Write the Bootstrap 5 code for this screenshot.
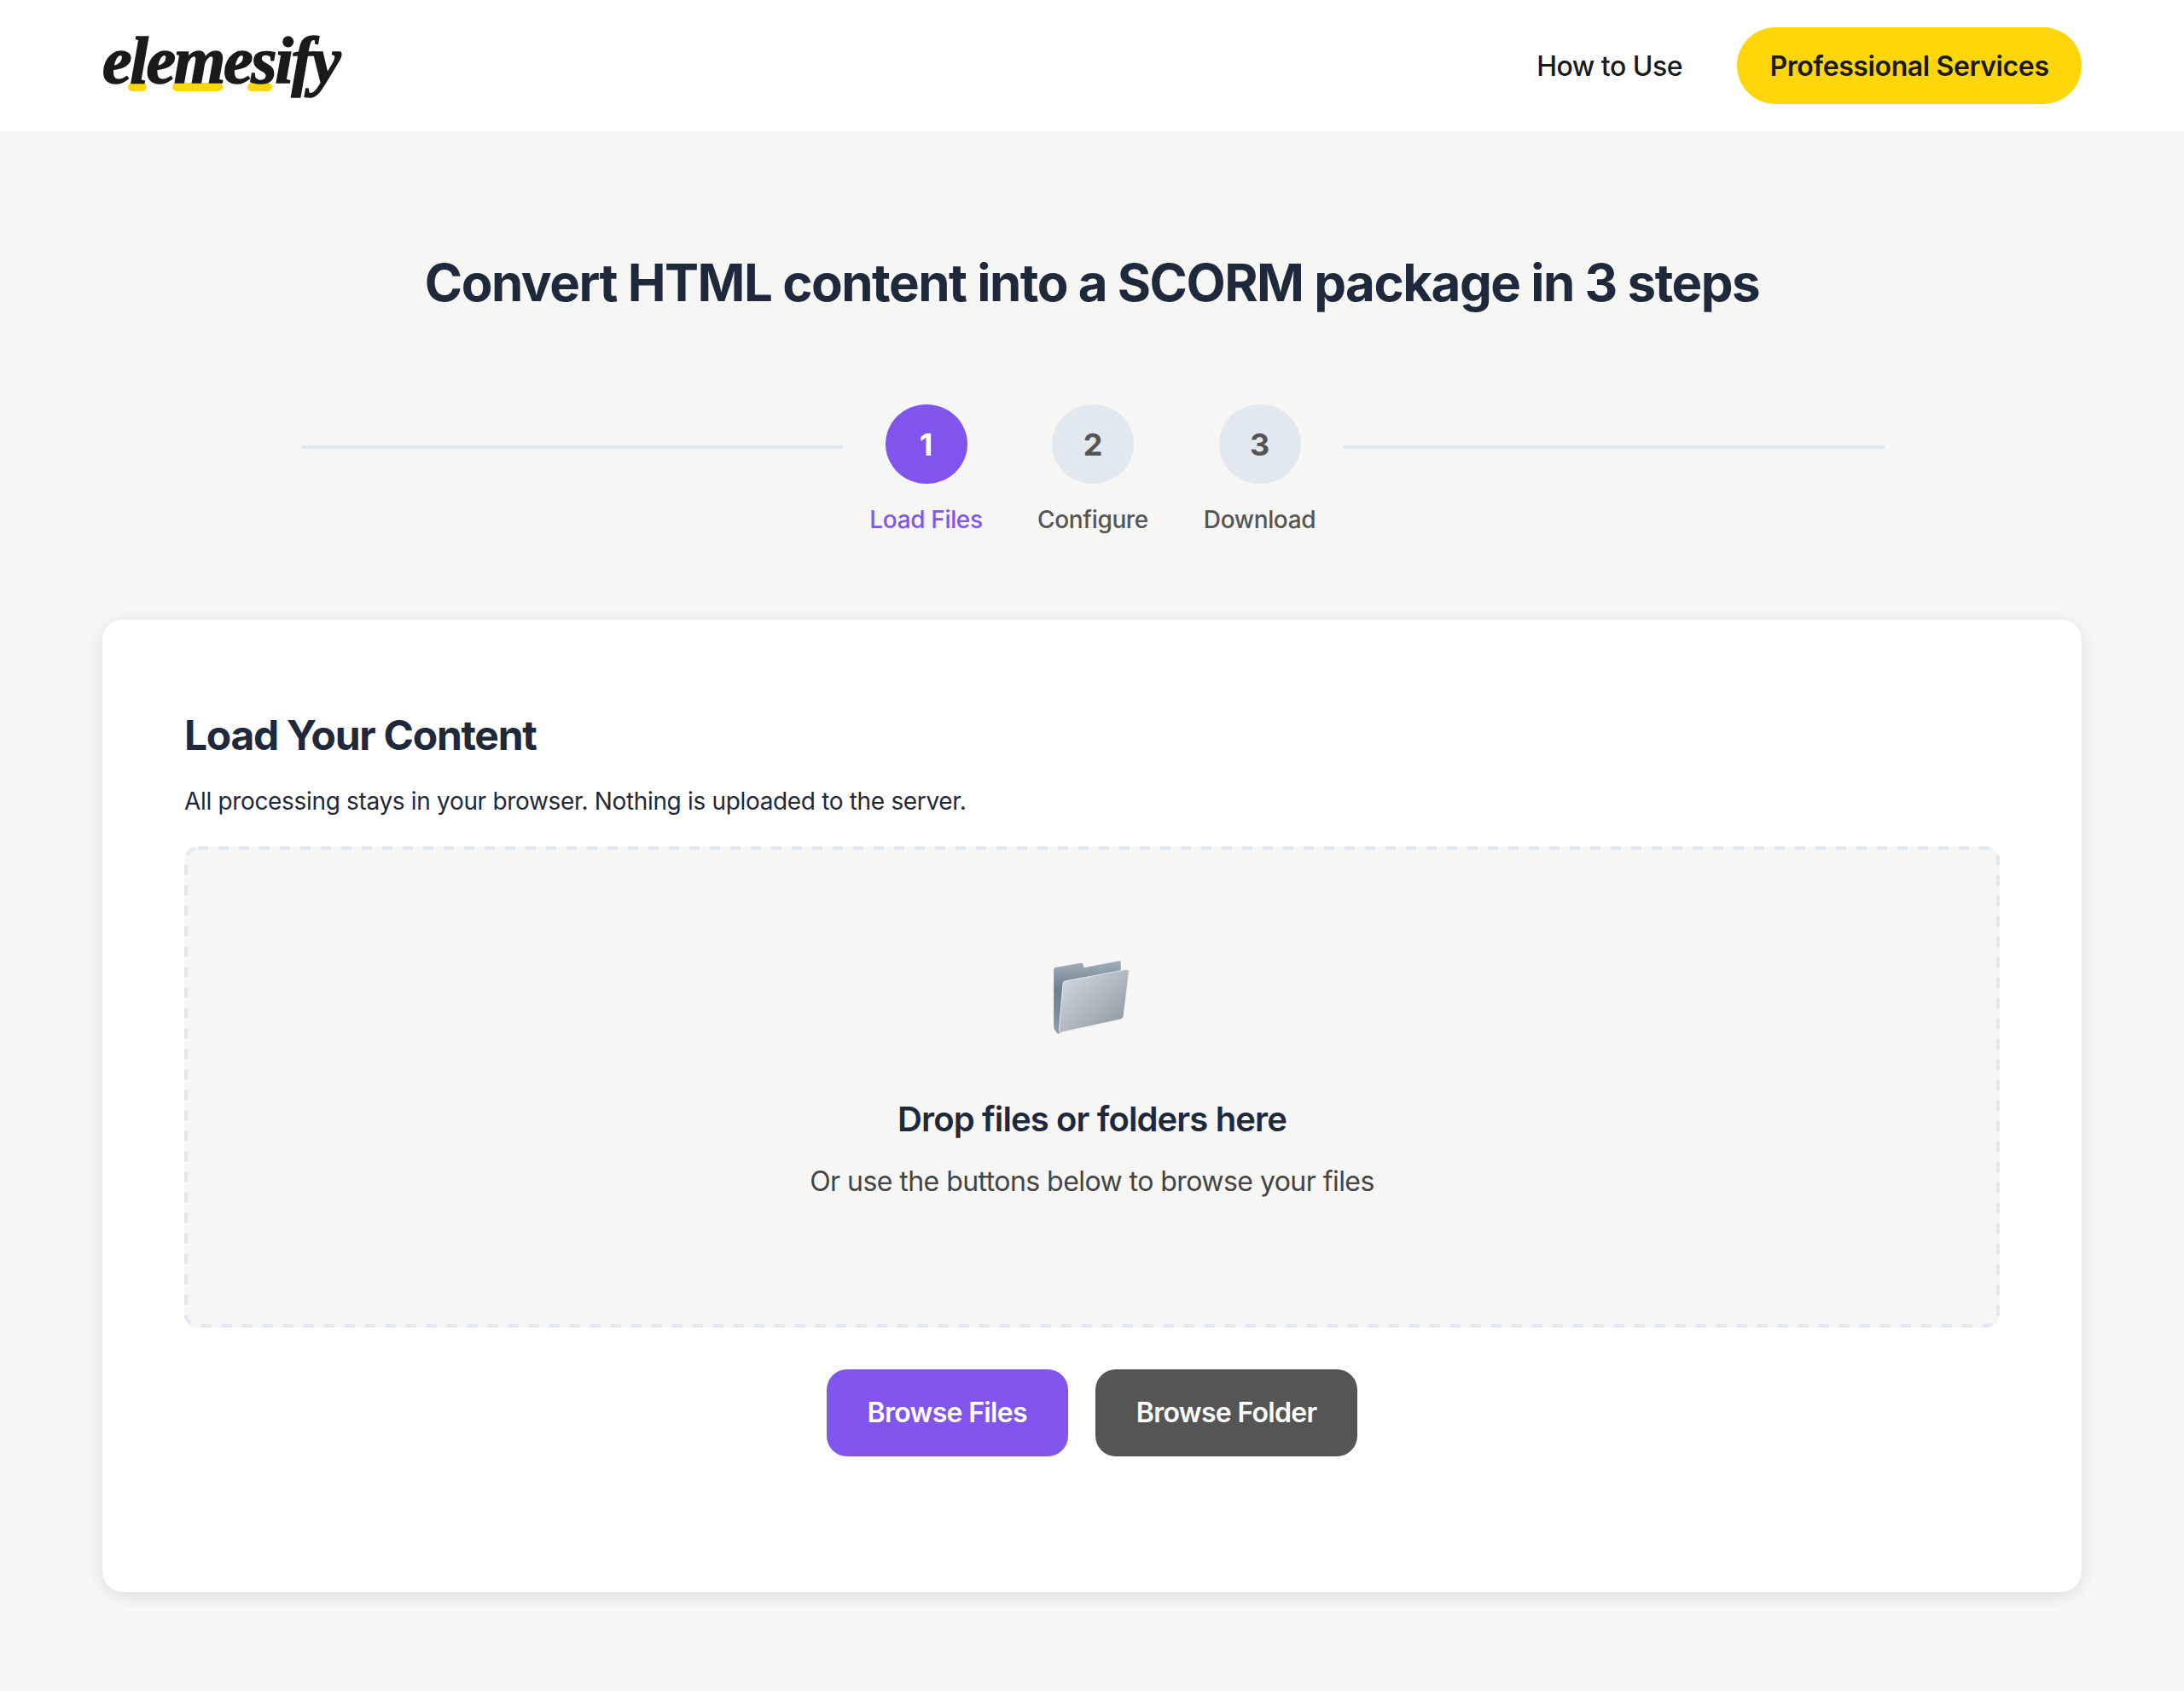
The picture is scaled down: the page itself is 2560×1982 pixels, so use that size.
<!DOCTYPE html>
<html lang="en">
  <head>
    <meta charset="UTF-8" />
    <meta name="viewport" content="width=device-width, initial-scale=1.0" />
    <title>elemesify</title>
    <link href="https://cdn.jsdelivr.net/npm/bootstrap@5.3.0/dist/css/bootstrap.min.css" rel="stylesheet" />
    <style>
      body {
        background-color: #f6f6f4;
        font-family: "Inter", "Liberation Sans", sans-serif;
        color: #1e293b;
        min-height: 1982px;
      }
      .top-bar {
        background: #fff;
        height: 154px;
        padding: 0 120px;
      }
      .logo-text {
        font-family: "Liberation Serif", serif;
        font-weight: 700;
        font-style: italic;
        font-size: 78px;
        line-height: 1;
        color: #1a1a1a;
        letter-spacing: -2.4px;
        -webkit-text-stroke: 1.5px #1a1a1a;
        text-decoration: none;
        position: relative;
        display: inline-block;
        width: 282px;
        height: 84px;
      }
      .logo-mark {
        position: absolute;
        top: 62px;
        height: 10px;
        background: #ffd60a;
        border-radius: 5px;
      }
      .logo-word {
        position: relative;
        display: block;
        margin-top: -3px;
        white-space: nowrap;
      }
      .how-link {
        font-size: 32px;
        font-weight: 500;
        color: #1a1a1a;
        text-decoration: none;
        letter-spacing: -0.5px;
        padding-top: 2px;
      }
      .pro-btn {
        background: #ffd60a;
        color: #1a1a1a;
        font-size: 32px;
        font-weight: 600;
        letter-spacing: -0.39px;
        border: 0;
        border-radius: 45px;
        padding: 2px 38px 0;
        height: 90px;
        width: 404px;
      }
      .page-title {
        font-size: 60px;
        font-weight: 700;
        color: #1e293b;
        line-height: 1.2;
        margin: 141px 0 0;
        letter-spacing: -1.5px;
      }
      .steps-row {
        margin: 107px 351px 0 353px;
        height: 156px;
      }
      .steps-line {
        flex: 1;
        height: 4px;
        background: #e2e8f0;
        margin-top: 48px;
      }
      .step-box {
        width: 131.5px;
        margin: 0 32px;
      }
      .step-dot {
        width: 96px;
        height: 96px;
        border-radius: 50%;
        background: #e2e8f0;
        color: #555;
        font-size: 36px;
        font-weight: 700;
      }
      .step-name {
        font-size: 28px;
        font-weight: 500;
        color: #555;
        margin-top: 21px;
        letter-spacing: -0.35px;
        white-space: nowrap;
      }
      .step-on .step-dot {
        background: #8155ed;
        color: #fff;
      }
      .step-on .step-name {
        color: #8155ed;
      }
      .main-card {
        margin: 96px 120px 0;
        height: 1140px;
        border: 0;
        border-radius: 24px;
        box-shadow: 0 4px 20px rgba(0, 0, 0, 0.1);
        padding: 96px;
      }
      .card-head {
        font-size: 48px;
        font-weight: 700;
        color: #1e293b;
        margin: 11px 0 0;
        line-height: 1.2;
        letter-spacing: -1.3px;
      }
      .card-note {
        font-size: 28px;
        color: #1e293b;
        margin: 27px 0 0;
        line-height: 1.5;
        letter-spacing: -0.33px;
      }
      .drop-area {
        position: relative;
        background: #f6f6f4;
        border-radius: 16px;
        height: 564px;
        margin-top: 32px;
        padding-top: 132px;
      }
      .drop-dash {
        position: absolute;
        top: 0;
        left: 0;
        width: 100%;
        height: 100%;
        pointer-events: none;
      }
      .drop-title {
        font-size: 40px;
        font-weight: 600;
        color: #1e293b;
        line-height: 1.2;
        margin: 72px 0 0;
        letter-spacing: -0.88px;
      }
      .drop-note {
        font-size: 32px;
        color: #444;
        margin: 25px 0 0;
        line-height: 1.5;
        letter-spacing: -0.55px;
      }
      .browse-btn {
        color: #fff;
        font-size: 32px;
        font-weight: 600;
        letter-spacing: -0.7px;
        border: 0;
        border-radius: 24px;
        height: 102px;
        padding: 0 48px;
      }
      .browse-one {
        background: #8155ed;
      }
      .browse-two {
        background: #555;
      }
      .browse-row {
        margin-top: 49px;
        gap: 32px;
      }
    </style>
  </head>
  <body>
    <nav class="navbar top-bar d-flex justify-content-between align-items-center">
      <a class="logo-text" href="#">
        <span class="logo-mark" style="left: 30px; width: 22px"></span>
        <span class="logo-mark" style="left: 82px; width: 59px"></span>
        <span class="logo-mark" style="left: 170px; width: 29px"></span>
        <span class="logo-word">elemesify</span>
      </a>
      <div class="d-flex align-items-center" style="gap: 64px">
        <a class="how-link" href="#">How to Use</a>
        <button class="btn pro-btn">Professional Services</button>
      </div>
    </nav>

    <h1 class="page-title text-center">Convert HTML content into a SCORM package in 3 steps</h1>

    <div class="steps-row d-flex justify-content-center">
      <div class="steps-line"></div>
      <div class="step-box step-on d-flex flex-column align-items-center">
        <div class="step-dot d-flex align-items-center justify-content-center">1</div>
        <div class="step-name">Load Files</div>
      </div>
      <div class="step-box d-flex flex-column align-items-center">
        <div class="step-dot d-flex align-items-center justify-content-center">2</div>
        <div class="step-name">Configure</div>
      </div>
      <div class="step-box d-flex flex-column align-items-center">
        <div class="step-dot d-flex align-items-center justify-content-center">3</div>
        <div class="step-name">Download</div>
      </div>
      <div class="steps-line"></div>
    </div>

    <div class="card main-card">
      <h2 class="card-head">Load Your Content</h2>
      <p class="card-note">All processing stays in your browser. Nothing is uploaded to the server.</p>
      <div class="drop-area text-center">
        <svg class="drop-dash" viewBox="0 0 2128 564" preserveAspectRatio="none">
          <rect x="2" y="2" width="2124" height="560" rx="14" fill="none" stroke="#e2e8f0" stroke-width="4" stroke-dasharray="12 12" />
        </svg>
        <svg width="94" height="92" viewBox="220 100 280 275" class="d-block mx-auto">
          <defs>
            <linearGradient id="backGrad" x1="0" y1="0" x2="0" y2="1">
              <stop offset="0" stop-color="#a3afbb" />
              <stop offset="0.4" stop-color="#6f7d8c" />
              <stop offset="1" stop-color="#8e9ba9" />
            </linearGradient>
            <linearGradient id="frontGrad" x1="0" y1="0" x2="1" y2="1">
              <stop offset="0" stop-color="#d6dce4" />
              <stop offset="0.55" stop-color="#aeb5bc" />
              <stop offset="1" stop-color="#85919e" />
            </linearGradient>
          </defs>
          <path d="M232 130 L320 114 Q328 113 329 120 L332 131 L455 107 Q461 106 461 112 L461 300 L250 358 Q240 368 232 352 Q226 345 226 335 L226 138 Q226 131 232 130 Z" fill="url(#backGrad)" />
          <path d="M270 177 L480 137 Q490 136 489 146 L471 298 Q469 310 458 312 L255 356 Q244 362 245 348 L258 190 Q259 179 270 177 Z" fill="url(#frontGrad)" stroke="#e6ebf0" stroke-width="3" />
        </svg>
        <h3 class="drop-title">Drop files or folders here</h3>
        <p class="drop-note">Or use the buttons below to browse your files</p>
      </div>
      <div class="browse-row d-flex justify-content-center">
        <button class="btn browse-btn browse-one">Browse Files</button>
        <button class="btn browse-btn browse-two">Browse Folder</button>
      </div>
    </div>

    <script src="https://cdn.jsdelivr.net/npm/bootstrap@5.3.0/dist/js/bootstrap.bundle.min.js"></script>
  </body>
</html>
